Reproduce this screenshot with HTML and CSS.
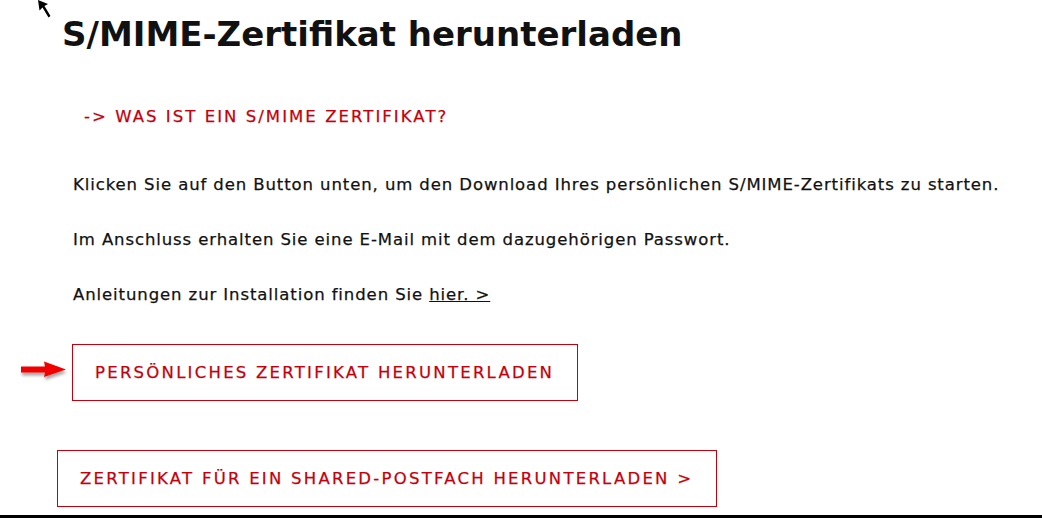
FILE: index.html
```html
<!DOCTYPE html>
<html lang="de">
<head>
  <meta charset="UTF-8" />
  <title>S/MIME-Zertifikat herunterladen</title>
  <meta name="viewport" content="width=device-width, initial-scale=1.0"/>
  <link rel="stylesheet" href="styles.css">
</head>
<body>

  <svg class="cursor" width="14" height="18" viewBox="0 0 14 18">
    <path d="M0 0 L10 4 L6.5 6 L12.5 16 L10.5 17.5 L4.5 7.5 L1.5 10.5 Z" fill="#000"/>
  </svg>

  <div class="page">
    <h1 class="title">S/MIME-Zertifikat herunterladen</h1>

    <a class="info-link" href="#">-&gt; WAS IST EIN S/MIME ZERTIFIKAT?</a>

    <p>Klicken Sie auf den Button unten, um den Download Ihres persönlichen S/MIME-Zertifikats zu starten.</p>
    <p>Im Anschluss erhalten Sie eine E-Mail mit dem dazugehörigen Passwort.</p>
    <p>Anleitungen zur Installation finden Sie <a class="text-link" href="#">hier. &gt;</a></p>

    <div class="download-row">
      <svg class="red-arrow" width="48" height="22" viewBox="0 0 48 22">
        <defs>
          <filter id="arrowShadow" x="-20%" y="-40%" width="140%" height="200%">
            <feDropShadow dx="1" dy="3" stdDeviation="1.5" flood-color="#000" flood-opacity="0.35"/>
          </filter>
        </defs>
        <path d="M1 6.5 L25 6.5 L24 1.5 L46 9.5 L24 17 L25 12.5 L1 12.5 Z" fill="#f00000" filter="url(#arrowShadow)"/>
      </svg>
      <a class="btn" href="#">PERSÖNLICHES ZERTIFIKAT HERUNTERLADEN</a>
    </div>

    <div class="shared-row">
      <a class="btn" href="#">ZERTIFIKAT FÜR EIN SHARED-POSTFACH HERUNTERLADEN &gt;</a>
    </div>
  </div>

  <div class="bottom-line"></div>

</body>
</html>
```

FILE: styles.css
```css
body {
  margin: 0;
  background-color: #fff;
  font-family: "DejaVu Sans", "Open Sans", sans-serif;
  color: #111;
  position: relative;
  height: 518px;
  overflow: hidden;
}

.cursor {
  position: absolute;
  left: 38px;
  top: 0;
}

.page {
  height: 515px;
}

.title {
  margin: 0;
  padding: 11px 0 0 62px;
  font-size: 34px;
  line-height: 46px;
  font-weight: 600;
  color: #111;
}

.info-link {
  display: block;
  margin: 50px 0 0 84px;
  font-size: 16.5px;
  line-height: 20px;
  letter-spacing: 2.05px;
  color: #c4000c;
  text-decoration: none;
  -webkit-text-stroke: 0.25px #c4000c;
}

p {
  margin: 48px 0 0 73px;
  font-size: 16.5px;
  line-height: 20px;
  letter-spacing: 0.9px;
  -webkit-text-stroke: 0.25px #111;
}

p + p {
  margin-top: 35px;
}

.text-link {
  color: #111;
}

.download-row {
  display: flex;
  align-items: center;
  gap: 4px;
  margin: 39px 0 0 20px;
}

.red-arrow {
  margin-top: -4px;
}

.btn {
  display: inline-block;
  border: 1px solid #c4000c;
  color: #c4000c;
  text-decoration: none;
  font-size: 16.5px;
  letter-spacing: 2.25px;
  line-height: 20px;
  padding: 18px 23px 17px 22px;
  -webkit-text-stroke: 0.25px #c4000c;
}

.shared-row {
  margin: 49px 0 0 57px;
}

.bottom-line {
  position: absolute;
  left: 0;
  right: 0;
  bottom: 0;
  height: 3px;
  background-color: #000;
}
```
